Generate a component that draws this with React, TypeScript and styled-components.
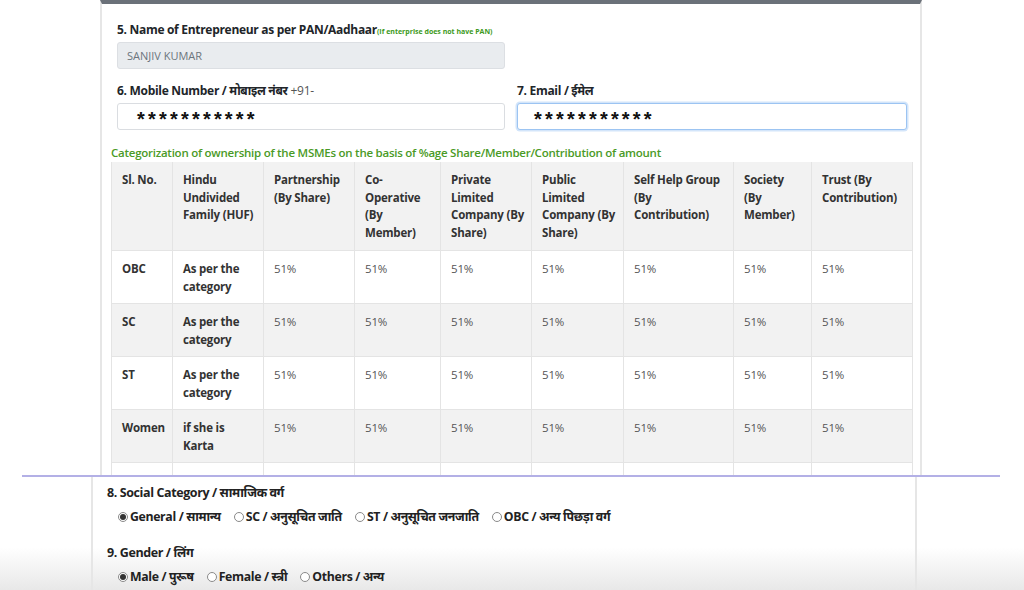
import React from 'react';
import styled, { createGlobalStyle } from 'styled-components';

const GlobalStyle = createGlobalStyle`
  html, body, #root {
    margin: 0;
    height: 590px;
    overflow: hidden;
  }
  body {
    background: #fff;
    font-family: "Open Sans", "Noto Sans", sans-serif;
    color: #212529;
  }
`;

const Page = styled.div`
  display: flex;
  flex-direction: column;
  height: 590px;
`;

const TopArea = styled.div`
  height: 475px;
  overflow: hidden;
  padding-left: 100px;
  flex-shrink: 0;
`;

const Card = styled.div`
  width: 822px;
  box-sizing: border-box;
  height: 100%;
  border-top: 4px solid #6b7179;
  border-left: 2px solid #e6e6e6;
  border-right: 2px solid #e6e6e6;
  padding: 17px 8px 0 9px;
`;

const FormGrid = styled.div`
  display: grid;
  grid-template-columns: 388px 390px;
  column-gap: 12px;
  row-gap: 13px;
  padding: 0 5px 0 6px;
`;

const Field = styled.div`
  display: flex;
  flex-direction: column;
`;

const Label = styled.label`
  display: block;
  height: 18px;
  font-size: 12px;
  line-height: 18px;
  font-weight: 700;
  letter-spacing: -0.3px;
  color: #212529;
  margin-bottom: 3px;
  white-space: nowrap;
`;

const Hint = styled.span`
  font-size: 7px;
  font-weight: 700;
  letter-spacing: 0;
  color: #3d9a1c;
`;

const Prefix = styled.span`
  font-weight: 400;
  color: #555;
  margin-left: 3px;
`;

const Input = styled.div<{ $disabled?: boolean; $focused?: boolean }>`
  height: 27px;
  box-sizing: border-box;
  border-radius: 3px;
  display: flex;
  align-items: center;
  border: 1px solid ${p => (p.$focused ? '#9cc4f2' : p.$disabled ? '#dcdfe3' : '#dadde1')};
  background: ${p => (p.$disabled ? '#e9ecef' : '#fff')};
  box-shadow: ${p => (p.$focused ? '0 0 0 1.5px #d3e5fa' : 'none')};
  padding-left: 9px;
`;

const DisabledText = styled.span`
  font-size: 11px;
  color: #6c757d;
`;

const Masked = styled.span<{ $indent: number }>`
  font-family: "Liberation Sans", Arial, sans-serif;
  font-weight: 700;
  font-size: 20px;
  letter-spacing: 3.2px;
  color: #111;
  margin-left: ${p => p.$indent}px;
  padding-top: 6px;
`;

const SectionTitle = styled.div`
  height: 17px;
  font-size: 11.5px;
  line-height: 17px;
  font-weight: 600;
  letter-spacing: -0.25px;
  color: #4a9a26;
  margin-top: 14px;
  margin-bottom: 1px;
  white-space: nowrap;
`;

const Table = styled.table`
  border-collapse: collapse;
  table-layout: fixed;
  width: 801px;
  font-size: 11.5px;
  line-height: 17.5px;
  letter-spacing: -0.2px;
  white-space: nowrap;
`;

const HeadCell = styled.th`
  text-align: left;
  vertical-align: top;
  font-weight: 700;
  color: #333;
  background: #f2f2f2;
  padding: 9px 4px 9px 10px;
  border: 1px solid #e4e4e4;
  border-top: none;
`;

const Row = styled.tr<{ $shade: boolean }>`
  background: ${p => (p.$shade ? '#f2f2f2' : '#fff')};
`;

const Cell = styled.td<{ $bold?: boolean }>`
  vertical-align: top;
  padding: 9px 4px 8px 10px;
  height: 35px;
  border: 1px solid #e4e4e4;
  font-weight: ${p => (p.$bold ? 700 : 400)};
  color: ${p => (p.$bold ? '#333' : '#555')};
`;

const Line = styled.span`
  display: block;
`;

const Divider = styled.div`
  height: 2px;
  width: 978px;
  margin-left: 22px;
  background: #b3b0e6;
  flex-shrink: 0;
`;

const BottomArea = styled.div`
  flex: 1;
  padding-left: 91px;
  background: linear-gradient(to bottom, #fff 0%, #fff 62%, #e8e8e8 100%);
`;

const Panel = styled.div`
  width: 826px;
  height: 100%;
  box-sizing: border-box;
  border-left: 2px solid #e6e6e6;
  border-right: 2px solid #e6e6e6;
  padding: 7px 0 0 14px;
`;

const SmallLabel = styled.div<{ $gap: number }>`
  font-size: 12.5px;
  line-height: 17px;
  font-weight: 700;
  color: #222;
  letter-spacing: -0.4px;
  margin-top: ${p => p.$gap}px;
`;

const RadioGroup = styled.div`
  display: flex;
  align-items: center;
  gap: 13px;
  padding-left: 11px;
  margin-top: 7px;
`;

const RadioOption = styled.span`
  display: inline-flex;
  align-items: center;
  gap: 2px;
  font-size: 12.3px;
  line-height: 17px;
  font-weight: 700;
  color: #222;
  letter-spacing: -0.35px;
  white-space: nowrap;
`;

const RadioDot = styled.span<{ $checked?: boolean }>`
  width: 10px;
  height: 10px;
  box-sizing: border-box;
  border-radius: 50%;
  border: 1px solid #8a8a8a;
  background: #fff;
  display: inline-flex;
  align-items: center;
  justify-content: center;
  &::after {
    content: '';
    width: 6px;
    height: 6px;
    border-radius: 50%;
    background: ${p => (p.$checked ? '#333' : 'transparent')};
  }
`;

// header text broken where the original page wraps it
const headers = [
  ['Sl. No.'],
  ['Hindu', 'Undivided', 'Family (HUF)'],
  ['Partnership', '(By Share)'],
  ['Co-', 'Operative', '(By', 'Member)'],
  ['Private', 'Limited', 'Company (By', 'Share)'],
  ['Public', 'Limited', 'Company (By', 'Share)'],
  ['Self Help Group', '(By', 'Contribution)'],
  ['Society', '(By', 'Member)'],
  ['Trust (By', 'Contribution)'],
];

const colWidths = [61, 91, 91, 86, 91, 92, 110, 78, 101];

const rows = [
  { cat: 'OBC', huf: ['As per the', 'category'] },
  { cat: 'SC', huf: ['As per the', 'category'] },
  { cat: 'ST', huf: ['As per the', 'category'] },
  { cat: 'Women', huf: ['if she is', 'Karta'] },
];

const socialOptions = [
  { label: 'General / सामान्य', checked: true },
  { label: 'SC / अनुसूचित जाति' },
  { label: 'ST / अनुसूचित जनजाति' },
  { label: 'OBC / अन्य पिछड़ा वर्ग' },
];

const genderOptions = [
  { label: 'Male / पुरूष', checked: true },
  { label: 'Female / स्त्री' },
  { label: 'Others / अन्य' },
];

const Radio: React.FC<{ label: string; checked?: boolean }> = ({ label, checked }) => (
  <RadioOption>
    <RadioDot $checked={checked} />
    {label}
  </RadioOption>
);

const App: React.FC = () => {
  return (
    <>
      <GlobalStyle />
      <Page>
        <TopArea>
          <Card>
            <FormGrid>
              <Field>
                <Label>
                  5. Name of Entrepreneur as per PAN/Aadhaar<Hint>(If enterprise does not have PAN)</Hint>
                </Label>
                <Input $disabled>
                  <DisabledText>SANJIV KUMAR</DisabledText>
                </Input>
              </Field>
              <div />
              <Field>
                <Label>
                  6. Mobile Number / मोबाइल नंबर<Prefix>+91-</Prefix>
                </Label>
                <Input>
                  <Masked $indent={10}>***********</Masked>
                </Input>
              </Field>
              <Field>
                <Label>7. Email / ईमेल</Label>
                <Input $focused>
                  <Masked $indent={7}>***********</Masked>
                </Input>
              </Field>
            </FormGrid>
            <SectionTitle>
              Categorization of ownership of the MSMEs on the basis of %age Share/Member/Contribution of amount
            </SectionTitle>
            <Table>
              <colgroup>
                {colWidths.map((w, i) => (
                  <col key={i} style={{ width: w }} />
                ))}
              </colgroup>
              <thead>
                <tr>
                  {headers.map(h => (
                    <HeadCell key={h.join(' ')}>
                      {h.map(l => (
                        <Line key={l}>{l}</Line>
                      ))}
                    </HeadCell>
                  ))}
                </tr>
              </thead>
              <tbody>
                {rows.map((r, i) => (
                  <Row key={r.cat} $shade={i % 2 === 1}>
                    <Cell $bold>{r.cat}</Cell>
                    <Cell $bold>
                      {r.huf.map(l => (
                        <Line key={l}>{l}</Line>
                      ))}
                    </Cell>
                    {Array.from({ length: 7 }).map((_, j) => (
                      <Cell key={j}>51%</Cell>
                    ))}
                  </Row>
                ))}
                <Row $shade={false}>
                  {colWidths.map((_, j) => (
                    <Cell key={j} />
                  ))}
                </Row>
              </tbody>
            </Table>
          </Card>
        </TopArea>
        <Divider />
        <BottomArea>
          <Panel>
            <SmallLabel $gap={0}>8. Social Category / सामाजिक वर्ग</SmallLabel>
            <RadioGroup>
              {socialOptions.map(o => (
                <Radio key={o.label} label={o.label} checked={o.checked} />
              ))}
            </RadioGroup>
            <SmallLabel $gap={19}>9. Gender / लिंग</SmallLabel>
            <RadioGroup>
              {genderOptions.map(o => (
                <Radio key={o.label} label={o.label} checked={o.checked} />
              ))}
            </RadioGroup>
          </Panel>
        </BottomArea>
      </Page>
    </>
  );
};

export default App;
